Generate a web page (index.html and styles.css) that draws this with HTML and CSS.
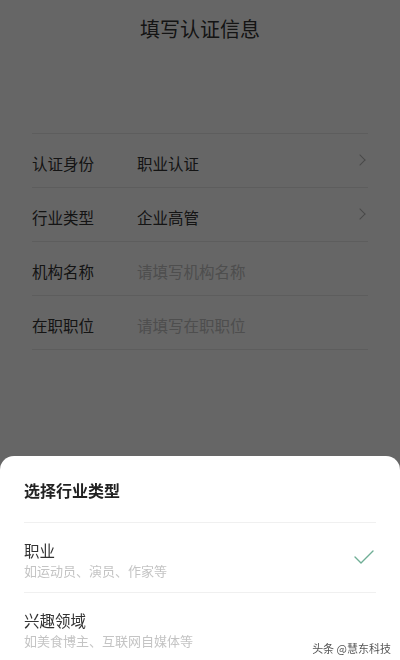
FILE: index.html
```html
<!DOCTYPE html>
<html lang="zh-CN">
<head>
    <meta charset="UTF-8">
    <meta name="viewport" content="width=device-width, initial-scale=1.0">
    <title>填写认证信息</title>
    <link rel="stylesheet" href="styles.css">
</head>
<body>
    <div class="page">
        <h1 class="page-title">填写认证信息</h1>

        <div class="form-list">
            <div class="form-row">
                <span class="form-label">认证身份</span>
                <span class="form-value">职业认证</span>
                <span class="chevron"></span>
            </div>
            <div class="form-row">
                <span class="form-label">行业类型</span>
                <span class="form-value">企业高管</span>
                <span class="chevron"></span>
            </div>
            <div class="form-row">
                <span class="form-label">机构名称</span>
                <span class="form-value placeholder">请填写机构名称</span>
            </div>
            <div class="form-row">
                <span class="form-label">在职职位</span>
                <span class="form-value placeholder">请填写在职职位</span>
            </div>
        </div>
    </div>

    <div class="mask"></div>

    <div class="sheet">
        <div class="sheet-title">选择行业类型</div>
        <div class="option">
            <div class="option-text">
                <div class="option-name">职业</div>
                <div class="option-desc">如运动员、演员、作家等</div>
            </div>
            <svg class="check" width="22" height="16" viewBox="0 0 22 16">
                <path d="M2 8 L8 14 L20 2" fill="none" stroke="#6fae95" stroke-width="1.4" stroke-linecap="round" stroke-linejoin="round"/>
            </svg>
        </div>
        <div class="option">
            <div class="option-text">
                <div class="option-name">兴趣领域</div>
                <div class="option-desc">如美食博主、互联网自媒体等</div>
            </div>
        </div>
    </div>

    <div class="watermark">头条 @慧东科技</div>
</body>
</html>
```

FILE: styles.css
```css
body {
    margin: 0;
    padding: 0;
    font-family: "Noto Sans CJK SC", "Noto Sans", sans-serif;
    background: #fff;
    color: #333;
}

.page {
    padding: 15px 32px 0;
}

.page-title {
    margin: 0 0 91px;
    text-align: center;
    font-size: 20px;
    line-height: 27px;
    font-weight: normal;
    color: #333;
}

.form-list {
    border-top: 1px solid #e8e8e8;
}

.form-row {
    display: flex;
    align-items: center;
    padding: 19px 0 14px;
    line-height: 20px;
    font-size: 15.5px;
    border-bottom: 1px solid #e8e8e8;
}

.form-label {
    width: 105px;
}

.form-value {
    flex: 1;
}

.placeholder {
    color: #c2c2c2;
}

.chevron {
    width: 7px;
    height: 7px;
    margin-right: 4px;
    margin-top: -6px;
    border-top: 1px solid #b5b5b5;
    border-right: 1px solid #b5b5b5;
    transform: rotate(45deg);
}

.mask {
    position: fixed;
    top: 0;
    left: 0;
    right: 0;
    bottom: 0;
    background: rgba(0, 0, 0, 0.6);
}

.sheet {
    position: fixed;
    left: 0;
    right: 0;
    top: 456px;
    bottom: 0;
    padding: 0 24px;
    background: #fff;
    border-radius: 14px 14px 0 0;
    overflow: hidden;
}

.sheet-title {
    padding: 23px 0 21px;
    font-size: 16px;
    line-height: 22px;
    font-weight: bold;
    color: #222;
    border-bottom: 1px solid #f0f0f0;
}

.option {
    display: flex;
    align-items: center;
    padding: 17px 0 12px;
    border-bottom: 1px solid #f0f0f0;
}

.option-text {
    flex: 1;
}

.option-name {
    font-size: 15.5px;
    line-height: 20px;
    color: #333;
    margin-bottom: 2px;
}

.option-desc {
    font-size: 13px;
    line-height: 18px;
    color: #c4c4c4;
}

.check {
    margin-right: 1px;
    margin-top: -6px;
}

.watermark {
    position: fixed;
    right: 9px;
    bottom: 4px;
    font-size: 11px;
    line-height: 16px;
    color: #555;
    text-shadow: 0 0 1px #fff;
}
```
